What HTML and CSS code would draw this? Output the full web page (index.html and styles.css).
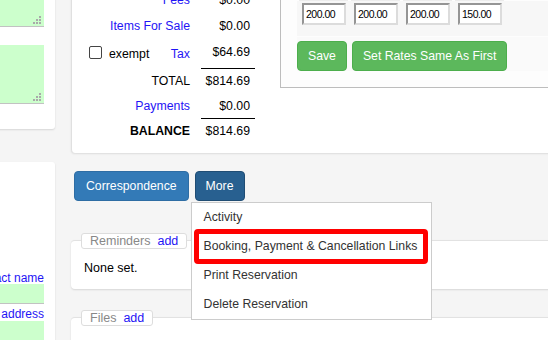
FILE: index.html
```html
<!DOCTYPE html>
<html lang="en">
<head>
<meta charset="utf-8">
<title>Reservation</title>
<link rel="stylesheet" href="styles.css">
</head>
<body>
<div class="page">
  <aside class="side">
    <div class="side-card side-card-top">
      <div class="note note-short">
        <svg class="grip" width="8" height="8" viewBox="0 0 8 8"><rect x="6" y="0" width="2" height="2"/><rect x="3" y="3" width="2" height="2"/><rect x="6" y="3" width="2" height="2"/><rect x="0" y="6" width="2" height="2"/><rect x="3" y="6" width="2" height="2"/><rect x="6" y="6" width="2" height="2"/></svg>
      </div>
      <div class="note note-tall">
        <svg class="grip" width="8" height="8" viewBox="0 0 8 8"><rect x="6" y="0" width="2" height="2"/><rect x="3" y="3" width="2" height="2"/><rect x="6" y="3" width="2" height="2"/><rect x="0" y="6" width="2" height="2"/><rect x="3" y="6" width="2" height="2"/><rect x="6" y="6" width="2" height="2"/></svg>
      </div>
    </div>
    <div class="side-card side-card-bottom">
      <div class="field-label">Contact name</div>
      <div class="note note-field"></div>
      <div class="field-label">Contact address</div>
      <div class="note note-field note-open"></div>
    </div>
  </aside>

  <main class="main">
    <section class="summary">
      <div class="totals">
        <div class="trow"><span class="tlabel link">Fees</span><span class="tvalue">$0.00</span></div>
        <div class="trow"><span class="tlabel link">Items For Sale</span><span class="tvalue">$0.00</span></div>
        <div class="trow trow-tax">
          <span class="tlabel tlabel-tax">
            <span class="exempt"><span class="check"></span><span>exempt</span></span>
            <span class="link">Tax</span>
          </span>
          <span class="tvalue">$64.69</span>
        </div>
        <div class="trow trow-total"><span class="tlabel">TOTAL</span><span class="tvalue ruled">$814.69</span></div>
        <div class="trow trow-pay"><span class="tlabel link">Payments</span><span class="tvalue">$0.00</span></div>
        <div class="trow trow-balance"><span class="tlabel strong">BALANCE</span><span class="tvalue ruled">$814.69</span></div>
      </div>

      <div class="rates">
        <div class="rate-grid">
          <span class="rate-head"></span><span class="rate-head"></span><span class="rate-head"></span><span class="rate-head"></span>
        </div>
        <div class="rate-grid rate-inputs">
          <span class="rate-cell"><input class="rate-input" type="text" value="200.00"></span>
          <span class="rate-cell"><input class="rate-input" type="text" value="200.00"></span>
          <span class="rate-cell"><input class="rate-input" type="text" value="200.00"></span>
          <span class="rate-cell"><input class="rate-input" type="text" value="150.00"></span>
        </div>
        <div class="rate-actions">
          <button class="btn btn-success" type="button">Save</button>
          <button class="btn btn-success" type="button">Set Rates Same As First</button>
        </div>
      </div>
    </section>

    <div class="actions">
      <button class="btn btn-primary" type="button">Correspondence</button>
      <div class="dropdown">
        <button class="btn btn-primary btn-more active" type="button">More</button>
        <ul class="menu">
          <li>Activity</li>
          <li class="marked">Booking, Payment &amp; Cancellation Links</li>
          <li>Print Reservation</li>
          <li>Delete Reservation</li>
        </ul>
      </div>
    </div>

    <section class="panel panel-reminders">
      <div class="legend"><span class="legend-title">Reminders</span><span class="link">add</span></div>
      <div class="panel-body">None set.</div>
    </section>

    <section class="panel panel-files">
      <div class="legend"><span class="legend-title">Files</span><span class="link">add</span></div>
    </section>
  </main>
</div>
</body>
</html>
```

FILE: styles.css
```css
* { box-sizing: border-box; }

html, body { margin: 0; height: 100%; }

body {
  background: #f5f5f5;
  font-family: "Liberation Sans", Arial, sans-serif;
  font-size: 12.3px;
  color: #000;
  overflow: hidden;
}

.link { color: #1f14f5; }
.strong { font-weight: bold; }

.page {
  display: grid;
  grid-template-columns: 100px 1fr;
  column-gap: 16px;
  align-items: start;
  margin: -13px 0 0 -45px;
  width: calc(100% + 70px);
}

/* ---------- left column ---------- */
.side { display: flex; flex-direction: column; }

.side-card {
  background: #fff;
  padding-right: 11px;
  box-shadow: 0 1px 2px rgba(0, 0, 0, 0.13);
}

.side-card-top { padding-bottom: 25px; border-radius: 0 0 3px 0; }

.side-card-bottom {
  margin-top: 33px;
  padding-top: 110px;
  border-radius: 0 3px 0 0;
  min-height: 220px;
}

.note {
  position: relative;
  background: #ccffcc;
  border-bottom: 1px solid #c2c2c2;
}

.note-short { height: 40px; }
.note-tall { height: 59px; margin-top: 18px; }
.note-field { height: 20px; margin-bottom: 4px; }
.note-open { height: 40px; margin-top: 1px; border-bottom: 0; }

.grip { position: absolute; right: 3px; bottom: 2px; fill: #a9a9a9; }

.field-label {
  text-align: right;
  color: #1f14f5;
  font-size: 12px;
  line-height: 12px;
  white-space: nowrap;
}

/* ---------- main column ---------- */
.main { display: flex; flex-direction: column; min-width: 0; }

.summary {
  display: flex;
  align-items: flex-start;
  background: #fff;
  border-left: 1px solid #e0e0e0;
  border-radius: 0 0 0 4px;
  box-shadow: 0 1px 2px rgba(0, 0, 0, 0.1);
  padding-bottom: 9px;
}

.totals { display: flex; flex-direction: column; }

.trow {
  display: grid;
  grid-template-columns: 118px 54px;
  column-gap: 11px;
  height: 26px;
  line-height: 16px;
}

.tlabel { text-align: right; padding-top: 5px; white-space: nowrap; }
.tvalue { text-align: right; padding: 5px 5px 0 0; }

.ruled { background: linear-gradient(#000, #000) top / 100% 1px no-repeat; }

.trow-tax { height: 29px; }
.trow-total, .trow-pay { height: 25px; }

.tlabel-tax {
  display: flex;
  justify-content: space-between;
  align-items: flex-start;
  padding: 7px 0 0 17px;
}

.exempt { display: flex; align-items: flex-start; gap: 7px; }

.check {
  width: 13px;
  height: 13px;
  border: 1px solid #444;
  border-radius: 2px;
  background: #fff;
}

/* rates panel */
.rates {
  flex: 1;
  margin-left: 25px;
  background: #fdfdfd;
  border-left: 1px solid #bdbdbd;
  border-bottom: 1px solid #bdbdbd;
  padding: 0 0 16px 16px;
}

.rate-grid {
  display: grid;
  grid-template-columns: repeat(4, 49px);
  column-gap: 3px;
  padding-left: 2px;
}

.rate-head { height: 14px; background: #ececec; }

.rate-inputs { background: #f7f7f7; height: 35px; }

.rate-cell { padding: 2px 0 0 3px; }

.rate-input {
  display: block;
  width: 44px;
  height: 22px;
  margin: 0;
  padding: 0 0 0 2px;
  border: 2px solid;
  border-color: #959595 #dcdcdc #dcdcdc #959595;
  background: #fff;
  font-family: "Liberation Sans", Arial, sans-serif;
  font-size: 10.5px;
  letter-spacing: -0.5px;
  color: #000;
}

.rate-actions {
  display: flex;
  gap: 5px;
  margin-top: 1px;
  padding-top: 4px;
  background: #fafafa;
}

/* buttons */
.btn {
  height: 30px;
  margin: 0;
  padding: 0 11px;
  border: 1px solid;
  border-radius: 4px;
  font-family: "Liberation Sans", Arial, sans-serif;
  font-size: 12.25px;
  line-height: 28px;
  color: #fff;
  white-space: nowrap;
}

.btn-primary { background: #337ab7; border-color: #2e6da4; }
.btn-primary.active { background: #286090; border-color: #204d74; }
.btn-more { padding: 0 10px; }
.btn-success { background: #5cb85c; border-color: #4cae4c; padding: 0 10px; }

.actions {
  display: flex;
  align-items: flex-start;
  gap: 6px;
  margin: 18px 0 0 3px;
}

.dropdown { position: relative; }

.menu {
  position: absolute;
  top: calc(100% + 1px);
  left: -4px;
  z-index: 5;
  width: 241px;
  margin: 0;
  padding: 0;
  list-style: none;
  background: #fff;
  border: 1px solid #cccccc;
}

.menu li {
  position: relative;
  height: 29px;
  line-height: 29px;
  padding-left: 12px;
  font-size: 12.25px;
  color: #333;
  white-space: nowrap;
}

.menu li.marked::after {
  content: "";
  position: absolute;
  top: -3px;
  bottom: -3px;
  left: 2px;
  right: 3px;
  border: 5px solid #ff0000;
  border-radius: 4px;
}

/* panels */
.panel {
  background: #fff;
  border-top: 1px solid #e2e2e2;
  border-radius: 4px 0 0 4px;
  box-shadow: 0 1px 2px rgba(0, 0, 0, 0.13);
  padding: 0 0 13px 13px;
  font-size: 12.5px;
}

.panel-reminders { margin-top: 39px; }
.panel-files { margin-top: 28px; min-height: 60px; }

.legend {
  display: flex;
  gap: 7px;
  width: max-content;
  margin: -8px 0 0 -3px;
  padding: 0 8px;
  line-height: 14px;
  background: #fff;
  border: 1px solid #dddddd;
  border-radius: 3px;
}

.legend-title { color: #888; }

.panel-body { margin-top: 11px; line-height: 16px; }
```
